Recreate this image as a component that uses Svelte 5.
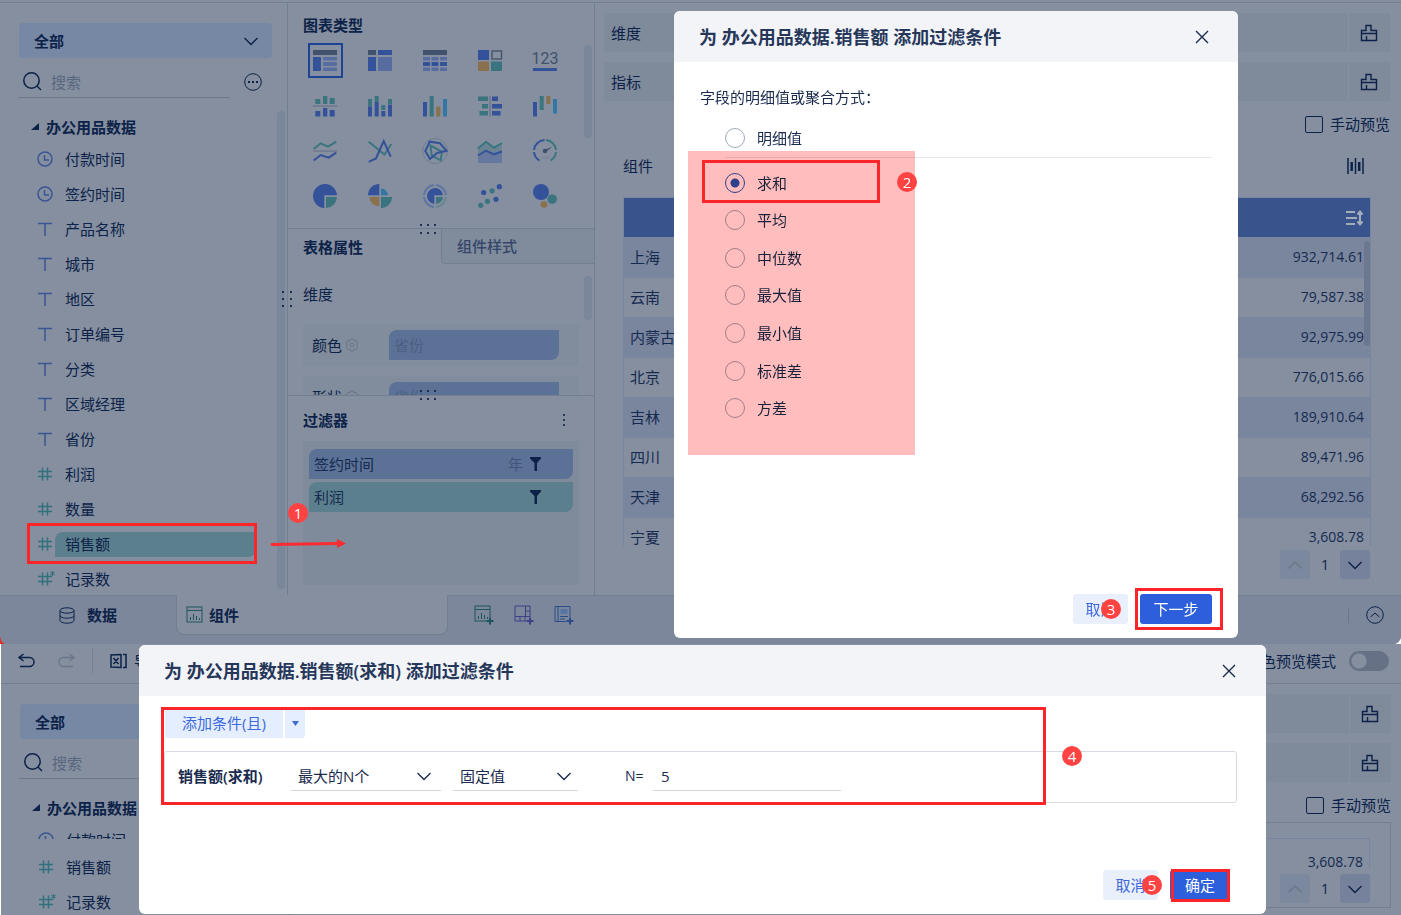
<script>
  const blue = "#34529a";
  const pale = "#576da0";
  const teal = "#3a757f";
  const gold = "#8a704c";
  const cyan = "#3377a5";
  const dark = "#41506b";
  const grey = "#737d92";

  const rect = (x, y, w, h, fill) =>
    `<rect x="${x}" y="${y}" width="${w}" height="${h}" fill="${fill}"/>`;
  const dot = (x, y, r, fill) =>
    `<circle cx="${x}" cy="${y}" r="${r}" fill="${fill}"/>`;
  const line = (points, color) =>
    `<polyline points="${points}" fill="none" stroke="${color}" stroke-width="2"/>`;
  const path = (d, fill) => `<path d="${d}" fill="${fill}"/>`;
  const stroke = (d, color) =>
    `<path d="${d}" fill="none" stroke="${color}" stroke-width="2"/>`;

  const cells = [0, 8.5, 17]
    .map((x) => rect(x, 8, 7, 3.5, pale) + rect(x, 13, 7, 4, blue) + rect(x, 18.5, 7, 3.5, pale))
    .join("");

  const charts = [
    { name: "分组表", art: rect(0, 1, 24, 5, dark) + rect(0, 8, 8, 14, blue) + rect(10, 8, 14, 3.5, pale) + rect(10, 13, 14, 4, pale) + rect(10, 18.5, 14, 3.5, pale) },
    { name: "交叉表", art: rect(0, 1, 8, 5, dark) + rect(10, 1, 14, 5, blue) + rect(0, 8, 8, 14, blue) + rect(10, 8, 14, 14, pale) },
    { name: "明细表", art: rect(0, 1, 24, 5, dark) + cells },
    { name: "热力图", art: rect(0, 1, 11, 10, blue) + `<rect x="14" y="2" width="9.5" height="8" fill="none" stroke="${dark}" stroke-width="1.3"/>` + rect(0, 12.5, 11, 9.5, gold) + rect(13, 12.5, 11, 9.5, teal) },
    { name: "指标卡", art: `<text x="12" y="15" text-anchor="middle" font-family="Roboto, sans-serif" font-size="16" fill="${dark}">123</text>` + rect(0, 19, 24, 3, blue) },
    { name: "对比柱图", art: rect(2.3, 5, 5, 5, teal) + rect(10, 2, 4.3, 8, teal) + rect(16.7, 4, 5, 6, teal) + rect(0, 11, 24, 2, grey) + rect(2.3, 17, 5, 5.5, blue) + rect(10, 14, 4.3, 8.5, blue) + rect(16.7, 16, 5, 6.5, blue) },
    { name: "堆积柱图", art: rect(0, 5, 4, 7.5, teal) + rect(6.7, 2, 4, 6, teal) + rect(13.3, 11, 4, 5, teal) + rect(20, 5, 4, 5, teal) + rect(0, 12.5, 4, 10, blue) + rect(6.7, 8, 4, 14.5, blue) + rect(13.3, 17, 4, 5.5, blue) + rect(20, 10.5, 4, 12, blue) },
    { name: "分区柱图", art: rect(0, 8, 4, 14.5, blue) + rect(6.7, 2, 4, 20.5, teal) + rect(13.3, 12.5, 4, 10, gold) + rect(20, 5, 4, 17.5, cyan) },
    { name: "对比条图", art: rect(11, 2, 2, 21, grey) + rect(0, 2.5, 10, 4.5, teal) + rect(4, 10, 6, 4.5, teal) + rect(1.5, 17, 8.5, 4.5, teal) + rect(14, 2.5, 6, 4.5, blue) + rect(14, 10, 10, 4.5, blue) + rect(14, 17, 8.5, 4.5, blue) },
    { name: "瀑布图", art: rect(0, 8, 4, 14.5, blue) + rect(6.7, 2, 4, 14, teal) + rect(13.3, 2, 4, 8, gold) + rect(20, 5, 4, 14.5, cyan) },
    { name: "范围面积图", art: line("0.7,10 7.7,4.3 15,7.7 23.3,2.7", teal) + rect(0, 11.2, 24, 1.8, grey) + line("0.7,21.5 7.7,16 15.7,18.7 23.3,13.7", blue) },
    { name: "折线图", art: line("0.7,2.7 16.5,15.5 23.3,5", teal) + line("0.7,22.8 8,19.5 15.7,2 22.7,17.7", blue) },
    { name: "雷达图", art: `<circle cx="12" cy="12" r="12.5" fill="none" stroke="${grey}"/>` + stroke("M7.5 6.5 19 12.7 17.7 21.3 8.7 16.5Z", teal) + stroke("M2.3 12 6.7 2.7 17 4.3 23.5 11.8 14 14 7 20Z", blue) },
    { name: "面积图", art: path("M0 9.5 8 2.5 16 9 24 4V13L16 16 8 12 0 17Z", "#6b8494") + line("0,9.5 8,2.8 16,8.7 24,4", teal) + path("M0 17 8 12 16 16 24 13V24H0Z", "#6778a0") + line("0,16.5 8,11.7 16,15.3 24,12.5", blue) },
    { name: "仪表盘", art: stroke("M1 11A11 11 0 0 1 11.5 1", blue) + stroke("M1 13A11 11 0 0 0 6.5 21.5", blue) + stroke("M13 1A11 11 0 0 1 23 11", teal) + stroke("M23 13A11 11 0 0 1 17.5 21.5", teal) + dot(12, 12, 2.3, dark) + path("M11.5 11 19.5 7.5 12.8 13Z", dark) + rect(8.5, 17.5, 7.5, 2, "#7b879b") },
    { name: "饼图", art: path("M11.3 12.7V24A12 12 0 1 1 24 11.3H11.3Z", blue) + path("M13 13H24A11.5 11.5 0 0 1 13 24Z", teal) },
    { name: "玫瑰图", art: path("M11.3 11.3V0A11.3 11.3 0 0 0 0 11.3Z", blue) + path("M13 11.3V4.5A7 7 0 0 1 20 11.3Z", cyan) + path("M11.3 13V22.3A9.7 9.7 0 0 1 1.5 13Z", gold) + path("M13 13H24A11 11 0 0 1 13 24Z", teal) },
    { name: "多层饼图", art: stroke("M1 11A11 11 0 0 1 11 1M13 1A11 11 0 0 1 23 11M11 23A11 11 0 0 1 1 13", "#5f74a2") + stroke("M23 13A11 11 0 0 1 13 23", "#67858f") + path("M11.3 12V20A8 8 0 1 1 20 11.3H11.3Z", blue) + path("M13 13H20A7.5 7.5 0 0 1 13 20Z", teal) },
    { name: "散点图", art: dot(21.3, 2.7, 2.6, blue) + dot(5.7, 8.5, 2.6, blue) + dot(14.2, 6.8, 2.6, teal) + dot(9.5, 17.3, 2.6, teal) + dot(18, 15.3, 2.6, blue) + dot(2.7, 21.3, 2.6, teal) },
    { name: "聚合气泡图", art: dot(8, 8, 8, blue) + dot(19.2, 15.2, 4.8, teal) + dot(11, 20.5, 3.3, gold) },
  ];

  const fields = [
    { name: "付款时间", type: "date" },
    { name: "签约时间", type: "date" },
    { name: "产品名称", type: "text" },
    { name: "城市", type: "text" },
    { name: "地区", type: "text" },
    { name: "订单编号", type: "text" },
    { name: "分类", type: "text" },
    { name: "区域经理", type: "text" },
    { name: "省份", type: "text" },
    { name: "利润", type: "number" },
    { name: "数量", type: "number" },
    { name: "销售额", type: "number" },
    { name: "记录数", type: "count" },
  ];

  const rows = [
    ["上海", "932,714.61"],
    ["云南", "79,587.38"],
    ["内蒙古", "92,975.99"],
    ["北京", "776,015.66"],
    ["吉林", "189,910.64"],
    ["四川", "89,471.96"],
    ["天津", "68,292.56"],
    ["宁夏", "3,608.78"],
  ];

  const aggregates = ["求和", "平均", "中位数", "最大值", "最小值", "标准差", "方差"];

  let selectedField = $state("销售额");
  let selectedChart = $state("分组表");
  let mode = $state("求和");
  let rank = $state("最大的N个");
  let valueType = $state("固定值");
  let n = $state("5");
</script>

{#snippet chevron(up = false)}
  <svg class="chevron" width="14" height="14" viewBox="0 0 14 14">
    <path d={up ? "M.5 10.5 7 4l6.500 6.500" : "M.5 4 7 10.500 13.500 4"} />
  </svg>
{/snippet}

{#snippet funnel()}
  <svg class="funnel" width="11" height="14" viewBox="0 0 11 14">
    <path d="M0 0h11v1.500L7 6v8H4.500V6L0 1.500z" />
  </svg>
{/snippet}

{#snippet fieldIcon(type)}
  <svg class="field-icon {type}" width="18" height="18" viewBox="0 0 18 18">
    {#if type === "date"}
      <circle cx="8" cy="8" r="7" />
      <path d="M7.500 4v5H12" />
    {:else if type === "text"}
      <path d="M1 2.500h14M8 2.500V15" />
    {:else}
      <path d="M1 5.500h14M1 10.500h14M5.500 1.500v13M10.500 1.500v13" />
      {#if type === "count"}
        <path class="star" d="M15.500 0v5M13.300 1.200l4.400 2.600M17.700 1.200l-4.400 2.600" />
      {/if}
    {/if}
  </svg>
{/snippet}

{#snippet fieldRow(field)}
  <button
    class="field"
    class:active={field.name === selectedField}
    onclick={() => (selectedField = field.name)}
  >
    {@render fieldIcon(field.type)}
    <span>{field.name}</span>
  </button>
{/snippet}

{#snippet sourceHead(id)}
  <button class="source"><b>全部</b>{@render chevron()}</button>
  <div class="search-row">
    <label class="search" for={id}>
      <svg width="19" height="19" viewBox="0 0 19 19">
        <circle cx="8.500" cy="8.500" r="7.700" />
        <path d="m14 14 4 4" />
      </svg>
      <input {id} type="text" placeholder="搜索" aria-label="搜索" />
    </label>
    <button class="more" aria-label="更多">
      <svg width="18" height="18" viewBox="0 0 18 18">
        <circle cx="9" cy="9" r="8.300" />
        <path class="plus" d="M4 9h2M8 9h2M12 9h2" />
      </svg>
    </button>
  </div>
  <div class="tree-head">
    <svg width="8" height="8" viewBox="0 0 8 8"><path d="M8 0v7H0z" /></svg>
    <b>办公用品数据</b>
  </div>
{/snippet}

{#snippet shelf(label)}
  <div class="shelf">
    <span>{label}</span>
    <button aria-label="清空{label}">
      <svg width="18" height="18" viewBox="0 0 18 18">
        <path d="M1.500 6.500h4.500V1.500h5v5h5.500v10h-15zM1.500 9.500h15M6.500 12v4.500" />
      </svg>
    </button>
  </div>
{/snippet}

{#snippet pager()}
  <nav class="pager" aria-label="分页">
    <button class="off" aria-label="上一页">{@render chevron(true)}</button>
    <span>1</span>
    <button aria-label="下一页">{@render chevron()}</button>
  </nav>
{/snippet}

{#snippet closeButton()}
  <button class="close" aria-label="关闭">
    <svg width="14" height="14" viewBox="0 0 14 14"><path d="m1 1 12 12M13 1 1 13" /></svg>
  </button>
{/snippet}

{#snippet bars()}
  <rect x="1" y="1" width="15" height="15" />
  <path d="M1 4.500h15M4.500 14v-3M7.500 14V8M10.500 14v-4M13.500 14v-2" />
{/snippet}

<section class="screen first">
  <div class="workspace">
    <aside class="fields">
      {@render sourceHead("search-fields")}
      <div class="tree">
        {#each fields as field}
          {@render fieldRow(field)}
        {/each}
      </div>
      <i class="scroll tree-scroll"></i>
      <i class="grip vertical"></i>
      <div class="mark mark-field"></div>
      <span class="badge badge-1">1</span>
      <svg class="arrow" width="76" height="12" viewBox="0 0 76 12">
        <path d="M1 6.500 67 5.500" fill="none" stroke="#fb2c31" stroke-width="3" stroke-linecap="round" />
        <path d="M66 1 75 5.500 66 10z" fill="#fb2c31" stroke="none" />
      </svg>
    </aside>

    <div class="settings">
      <div class="types">
        <h2>图表类型</h2>
        <div class="chart-grid">
          {#each charts as chart}
            <button
              class:picked={chart.name === selectedChart}
              aria-label={chart.name}
              onclick={() => (selectedChart = chart.name)}
            >
              <svg width="24" height="24" viewBox="0 0 24 24">{@html chart.art}</svg>
            </button>
          {/each}
        </div>
        <i class="scroll types-scroll"></i>
        <i class="grip"></i>
      </div>

      <div class="props">
        <div class="tabs">
          <button class="on">表格属性</button>
          <button>组件样式</button>
        </div>
        <h3>维度</h3>
        {#each ["颜色", "形状"] as prop}
          <div class="prop">
            <span>{prop}</span>
            <svg width="14" height="14" viewBox="0 0 14 14">
              <path d="M5.500 1h3l.6 1.800 2.300-.3 1.500 2.600L11.600 7l1.300 1.900-1.500 2.600-2.300-.3L8.500 13h-3l-.6-1.800-2.300.3L1.100 8.900 2.400 7 1.100 5.100l1.500-2.600 2.300.3z" />
              <circle cx="7" cy="7" r="2" />
            </svg>
            <div class="chip ghost">省份</div>
          </div>
        {/each}
        <i class="scroll props-scroll"></i>
      </div>

      <div class="filters">
        <i class="grip top"></i>
        <header>
          <h2>过滤器</h2>
          <button class="dots" aria-label="过滤器选项"><i></i><i></i><i></i></button>
        </header>
        <div class="drop">
          <div class="chip">签约时间 <small>年</small>{@render funnel()}</div>
          <div class="chip green">利润 {@render funnel()}</div>
        </div>
      </div>
    </div>

    <main class="preview">
      {@render shelf("维度")}
      {@render shelf("指标")}
      <label class="manual"><input type="checkbox" />手动预览</label>
      <div class="widget-head">
        <span>组件</span>
        <svg width="17" height="16" viewBox="0 0 17 16">
          <path d="M1 0v16M8.500 0v16M16 0v16" />
          <path class="thick" d="M4.700 4v9M12.200 4v9" />
        </svg>
      </div>
      <div class="table-wrap">
        <table>
          <thead>
            <tr>
              <th></th>
              <th>
                <svg width="18" height="16" viewBox="0 0 18 16">
                  <path d="M0 2h9M0 8h11M0 14h9M14 2v12M11.500 4.500 14 1.500l2.500 3M11.500 11.500l2.500 3 2.500-3" />
                </svg>
              </th>
            </tr>
          </thead>
          <tbody>
            {#each rows as [province, amount]}
              <tr><td>{province}</td><td>{amount}</td></tr>
            {/each}
          </tbody>
        </table>
        <i class="scroll table-scroll"></i>
      </div>
      {@render pager()}
    </main>
  </div>

  <footer class="bottom-bar">
    <button class="page-tab data">
      <svg width="16" height="17" viewBox="0 0 16 17">
        <ellipse cx="8" cy="3.500" rx="7" ry="2.700" />
        <path d="M1 3.500v10c0 1.500 3.200 2.700 7 2.700s7-1.200 7-2.700v-10M1 8.500c0 1.500 3.200 2.700 7 2.700s7-1.200 7-2.700" />
      </svg>
      数据
    </button>
    <button class="page-tab current">
      <svg class="ink-green" width="17" height="17" viewBox="0 0 17 17">{@render bars()}</svg>
      组件
    </button>
    <div class="adders">
      <button aria-label="添加组件">
        <svg class="ink-green" width="20" height="20" viewBox="0 0 20 20">
          {@render bars()}
          <path class="plus" d="M16 12.500v7M12.500 16h7" />
        </svg>
      </button>
      <button aria-label="添加仪表板">
        <svg class="ink-purple" width="20" height="20" viewBox="0 0 20 20">
          <path d="M16 12V1H1v15h11M11.500 1v10.500M1 11.500h15M11.500 6H16M6 11.500V16M11 11.500V16" />
          <path class="plus" d="M16 12.500v7M12.500 16h7" />
        </svg>
      </button>
      <button aria-label="添加报告">
        <svg class="ink-blue" width="20" height="20" viewBox="0 0 20 20">
          <path d="M16 12V1.500H1v15h11M4 1.500v15M6 11.500h8M6 14h5" />
          <rect x="6.500" y="4" width="7" height="5" fill="#5674a6" stroke="none" />
          <path class="plus" d="M16 12.500v7M12.500 16h7" />
        </svg>
      </button>
    </div>
    <button class="collapse" aria-label="收起">
      <i></i>
      <svg width="18" height="18" viewBox="0 0 18 18">
        <circle cx="9" cy="9" r="8.300" />
        <path d="m4.500 11 4.500-4 4.500 4" />
      </svg>
    </button>
  </footer>

  <div class="dialog pick" role="dialog" aria-labelledby="pick-title">
    <header>
      <h1 id="pick-title">为 办公用品数据.销售额 添加过滤条件</h1>
      {@render closeButton()}
    </header>
    <fieldset>
      <legend>字段的明细值或聚合方式：</legend>
      <label class="detail"><input type="radio" value="明细值" bind:group={mode} />明细值</label>
      <div class="aggregates">
        {#each aggregates as item}
          <label><input type="radio" value={item} bind:group={mode} />{item}</label>
        {/each}
      </div>
    </fieldset>
    <div class="actions">
      <button class="cancel">取消</button>
      <button class="primary wide">下一步</button>
    </div>
    <div class="wash"></div>
    <div class="mark mark-sum"></div>
    <div class="mark mark-next"></div>
    <span class="badge badge-2">2</span>
    <span class="badge badge-3">3</span>
  </div>
</section>

<section class="screen second">
  <div class="toolbar">
    <button aria-label="撤销">
      <svg width="17" height="15" viewBox="0 0 17 15"><path d="M5.500 1 1 4.500 5.500 8M1 4.500h10.500a4.500 4.500 0 0 1 0 9H2" /></svg>
    </button>
    <button class="off" aria-label="重做">
      <svg width="17" height="15" viewBox="0 0 17 15"><path d="M11.500 1 16 4.500 11.500 8M16 4.500H5.500a4.500 4.500 0 0 0 0 9H15" /></svg>
    </button>
    <button class="export">
      <svg width="17" height="16" viewBox="0 0 17 16">
        <path d="M11 1.500 1 2v12l10 .500zM13 1.500h3v13h-3M3.500 5l5 6M8.500 5l-5 6" />
      </svg>
      导
    </button>
    <label class="preview-mode">色预览模式<input type="checkbox" /></label>
  </div>
  <div class="workspace">
    <aside class="fields">
      {@render sourceHead("search-fields-2")}
      <div class="tree cut">{@render fieldRow(fields[0])}</div>
      <div class="tree tail">
        <div class="field">{@render fieldIcon("number")}<span>销售额</span></div>
        {@render fieldRow(fields[12])}
      </div>
    </aside>
    <main class="preview">
      {@render shelf("维度")}
      {@render shelf("指标")}
      <label class="manual"><input type="checkbox" />手动预览</label>
      <div class="frame">
        <div class="last-row">3,608.78</div>
        {@render pager()}
      </div>
    </main>
  </div>

  <div class="dialog condition" role="dialog" aria-labelledby="condition-title">
    <header>
      <h1 id="condition-title">为 办公用品数据.销售额(求和) 添加过滤条件</h1>
      {@render closeButton()}
    </header>
    <div class="add">
      <button>添加条件(且)</button>
      <button aria-label="更多条件">
        <svg width="7" height="5" viewBox="0 0 7 5"><path d="M0 0h7L3.500 5z" /></svg>
      </button>
    </div>
    <div class="rule">
      <b>销售额(求和)</b>
      <div class="drop-down rank">
        <select aria-label="条件" bind:value={rank}>
          <option>最大的N个</option>
        </select>
        {@render chevron()}
      </div>
      <div class="drop-down kind">
        <select aria-label="值类型" bind:value={valueType}>
          <option>固定值</option>
        </select>
        {@render chevron()}
      </div>
      <label for="n-value">N=</label>
      <input id="n-value" type="text" bind:value={n} />
    </div>
    <div class="actions">
      <button class="cancel">取消</button>
      <button class="primary">确定</button>
    </div>
    <div class="mark mark-rule"></div>
    <div class="mark mark-ok"></div>
    <span class="badge badge-4">4</span>
    <span class="badge badge-5">5</span>
  </div>
</section>

<style>
  :global(body) {
    background: #fff;
    overflow: hidden;
  }

  .screen {
    --page: #858f9f;
    --ink: #0c2248;
    --line: #737e91;
    position: relative;
    background: var(--page);
    color: var(--ink);
    font: 15px/20px "Open Sans", "Noto Sans CJK SC", sans-serif;
  }
  .screen * {
    box-sizing: border-box;
  }
  button,
  input,
  select {
    font: inherit;
    color: inherit;
    background: none;
    border: 0;
    padding: 0;
    margin: 0;
    outline: 0;
  }
  button {
    cursor: pointer;
  }
  svg {
    flex: none;
    fill: none;
    stroke: currentColor;
    overflow: visible;
  }
  b,
  h2 {
    font-weight: 600;
  }
  h1,
  h2,
  h3 {
    margin: 0;
    font-size: 15px;
  }
  .chevron {
    stroke-width: 1.4;
  }

  .first {
    padding-top: 2px;
    border-radius: 0 0 8px 0;
  }
  .first::after {
    content: "";
    position: absolute;
    left: 0;
    bottom: 0;
    width: 8px;
    height: 7px;
    background: radial-gradient(circle at 8px 0, transparent 7px, #d8352f 8px);
  }
  .workspace {
    display: flex;
  }
  .first .workspace {
    border-top: 1px solid var(--line);
    height: 593px;
  }

  .fields {
    position: relative;
    flex: none;
    width: 288px;
    padding: 20px 15px 0 18px;
    border-right: 1px solid var(--line);
  }
  .source {
    display: flex;
    align-items: center;
    justify-content: space-between;
    width: 253px;
    height: 35px;
    margin-left: 1px;
    padding: 0 14px 0 15px;
    background: #7688a4;
    border-radius: 4px;
  }
  .search-row {
    display: flex;
    align-items: center;
    gap: 14px;
    margin-top: 8px;
  }
  .search {
    display: flex;
    align-items: center;
    gap: 9px;
    width: 212px;
    height: 32px;
    padding-left: 5px;
    border-bottom: 1px solid #6d788b;
  }
  .search svg {
    stroke-width: 1.5;
  }
  .search input {
    min-width: 0;
    flex: 1;
  }
  .search input::placeholder {
    color: #596680;
    opacity: 1;
  }
  .more,
  .close {
    display: flex;
  }
  .tree-head {
    display: flex;
    align-items: center;
    gap: 7px;
    height: 30px;
    margin-top: 14px;
    padding-left: 13px;
  }
  .tree-head svg {
    fill: currentColor;
    stroke: none;
  }
  .tree {
    display: flex;
    flex-direction: column;
  }
  .first .tree {
    height: 453px;
    overflow: hidden;
  }
  .field {
    display: flex;
    align-items: center;
    flex: none;
    width: 238px;
    height: 35px;
    padding-left: 19px;
    text-align: left;
  }
  .field span {
    flex: 1;
    height: 25px;
    line-height: 25px;
    padding-left: 10px;
  }
  .field.active span {
    background: #5c7f8d;
    border-radius: 8px 0;
  }
  .field-icon {
    color: #3b5593;
    stroke-width: 1.5;
  }
  .field-icon.number,
  .field-icon.count {
    color: #32707c;
  }
  .star {
    stroke-width: 1;
  }

  .scroll {
    position: absolute;
    width: 8px;
    border-radius: 4px;
    background: #7a869a;
  }
  .tree-scroll {
    top: 108px;
    right: 2px;
    height: 478px;
  }
  .types-scroll {
    top: 42px;
    right: 2px;
    height: 93px;
  }
  .props-scroll {
    top: 47px;
    right: 2px;
    height: 44px;
  }
  .grip {
    position: absolute;
    z-index: 1;
    left: 132px;
    bottom: -6px;
    width: 17px;
    height: 10px;
    background: conic-gradient(from 0deg at 2px 2px, transparent 270deg, #1d3052 0) 0 0 / 7px 8px;
  }
  .grip.top {
    top: -6px;
    bottom: auto;
  }
  .grip.vertical {
    left: 282px;
    top: 288px;
    width: 10px;
    height: 16px;
    background-size: 8px 7px;
  }

  .settings {
    display: flex;
    flex-direction: column;
    flex: none;
    width: 307px;
    border-right: 1px solid var(--line);
  }
  .types {
    position: relative;
    height: 226px;
    padding: 12px 15px 0;
    border-bottom: 1px solid var(--line);
  }
  .chart-grid {
    display: grid;
    grid-template-columns: repeat(5, 35px);
    gap: 10px 20px;
    margin: 8px 5px 0;
  }
  .chart-grid button {
    display: grid;
    place-items: center start;
    height: 35px;
    padding-left: 3px;
    border: 2px solid transparent;
  }
  .chart-grid button.picked {
    border-color: #1c4394;
  }
  .chart-grid svg {
    stroke: none;
  }

  .props {
    position: relative;
    height: 166px;
    overflow: hidden;
    padding-left: 15px;
  }
  .tabs {
    display: flex;
    height: 35px;
  }
  .tabs button {
    flex: 1;
    padding-left: 15px;
    text-align: left;
    font-weight: 500;
    color: #35466a;
    background: #808b9c;
    border: 1px solid var(--line);
    border-width: 0 0 1px 1px;
    border-bottom-left-radius: 5px;
  }
  .tabs .on {
    flex: 0 0 138px;
    padding: 0;
    font-weight: 600;
    color: var(--ink);
    background: none;
    border: 0;
  }
  .props h3 {
    height: 60px;
    padding-top: 20px;
    font-weight: 400;
  }
  .prop {
    display: flex;
    align-items: center;
    width: 276px;
    height: 42px;
    margin-bottom: 10px;
    padding-left: 9px;
    background: #818c9c;
  }
  .prop svg {
    margin: 0 30px 0 3px;
    color: #69758a;
  }
  .chip {
    display: flex;
    align-items: center;
    height: 30px;
    padding: 0 32px 0 5px;
    border-radius: 8px 0;
    background: #5c7196;
    color: #142b50;
  }
  .chip.ghost {
    width: 170px;
    color: #4b5f84;
  }
  .chip.green {
    background: #5c7f8d;
  }
  .chip small {
    margin-left: auto;
    margin-right: 7px;
    font-size: 15px;
    color: #41557b;
  }
  .funnel {
    margin-left: auto;
    fill: var(--ink);
    stroke: none;
  }
  small + .funnel {
    margin-left: 0;
  }
  .filters {
    position: relative;
    flex: 1;
    padding: 0 15px;
    border-top: 1px solid var(--line);
  }
  .filters header {
    display: flex;
    align-items: center;
    justify-content: space-between;
    height: 45px;
    padding: 2px 14px 0 0;
  }
  .dots {
    display: grid;
    gap: 3px;
  }
  .dots i {
    width: 2px;
    height: 2px;
    background: #2a3b5c;
  }
  .drop {
    display: flex;
    flex-direction: column;
    gap: 3px;
    height: 144px;
    padding: 8px 6px;
    background: #7f8a9b;
  }

  .preview {
    flex: 1;
    min-width: 0;
    padding: 10px 11px 0 9px;
  }
  .shelf {
    display: flex;
    align-items: center;
    justify-content: space-between;
    height: 39px;
    margin-bottom: 10px;
    padding-left: 7px;
    background: #7f8a9b;
  }
  .shelf button {
    display: grid;
    place-items: center;
    width: 42px;
    height: 39px;
    padding-right: 2px;
    border-left: 1px solid #8691a1;
  }
  .shelf svg {
    stroke-width: 1.4;
  }
  .manual {
    display: flex;
    align-items: center;
    justify-content: flex-end;
    gap: 7px;
    height: 26px;
  }
  .manual input {
    appearance: none;
    width: 18px;
    height: 17px;
    border: 1px solid var(--ink);
    border-radius: 2px;
  }
  .widget-head {
    display: flex;
    align-items: center;
    justify-content: space-between;
    height: 60px;
    padding: 0 26px 3px 19px;
  }
  .widget-head svg {
    stroke-width: 1.5;
  }
  .widget-head .thick {
    stroke-width: 2.5;
  }
  .table-wrap {
    position: relative;
    height: 349px;
    overflow: hidden;
    margin: 0 19px;
    border: 1px solid #7985a0;
    border-bottom: 0;
  }
  table {
    width: 100%;
    border-collapse: collapse;
  }
  th {
    height: 39px;
    padding: 0 6px 2px 0;
    background: #39548c;
    color: #a3acbb;
    text-align: right;
  }
  th svg {
    display: inline-block;
    vertical-align: middle;
    stroke-width: 2;
  }
  td {
    height: 40px;
    padding: 0 6px;
    border-bottom: 1px solid #7985a0;
    color: #162a50;
  }
  td:last-child,
  .last-row {
    font-size: 14px;
    text-align: right;
  }
  tbody tr:nth-child(odd) {
    background: #7a869e;
  }
  .table-scroll {
    top: 43px;
    right: 0;
    width: 6px;
    height: 105px;
    background: #6c7890;
  }
  .pager {
    display: flex;
    justify-content: flex-end;
    align-items: center;
    gap: 11px;
    margin: 4px 20px 0 0;
    font-size: 14px;
  }
  .pager button {
    display: grid;
    place-items: center;
    width: 30px;
    height: 29px;
    border-radius: 3px;
    background: #76829c;
  }
  .pager .off {
    background: #7c889e;
    color: #6b768a;
  }

  .bottom-bar {
    display: flex;
    height: 49px;
    background: #7c879b;
    border-bottom-right-radius: 8px;
  }
  .page-tab {
    display: flex;
    align-items: center;
    font-weight: 600;
  }
  .page-tab.data {
    justify-content: center;
    gap: 12px;
    width: 176px;
    height: 39px;
    border-top: 1px solid var(--line);
  }
  .page-tab.current {
    gap: 6px;
    width: 272px;
    height: 40px;
    padding-left: 9px;
    background: var(--page);
    border: 1px solid var(--line);
    border-top: 0;
    border-radius: 0 0 8px 8px;
  }
  .adders {
    display: flex;
    flex: 1;
    gap: 20px;
    height: 39px;
    padding-left: 26px;
    border-top: 1px solid var(--line);
  }
  .adders button {
    display: flex;
    align-items: center;
  }
  .ink-green {
    color: #1f5560;
  }
  .ink-purple {
    color: #3e3f88;
  }
  .ink-blue {
    color: #2b4c88;
  }
  .plus {
    stroke-width: 2;
  }
  .collapse {
    display: flex;
    align-items: center;
    gap: 17px;
    width: 53px;
    height: 39px;
    border-top: 1px solid var(--line);
  }
  .collapse i {
    width: 1px;
    height: 15px;
    background: #6c778c;
  }

  .dialog {
    position: absolute;
    z-index: 2;
    display: flex;
    flex-direction: column;
    background: #fff;
    border-radius: 6px;
    color: #1a2b4e;
  }
  .dialog header {
    display: flex;
    align-items: center;
    justify-content: space-between;
    height: 51px;
    padding: 0 29px 0 25px;
    background: #f2f4f8;
    border-radius: 6px 6px 0 0;
  }
  h1 {
    font-size: 18px;
    font-weight: 600;
    color: #26375a;
  }
  .close svg {
    stroke-width: 1.4;
  }
  .pick {
    top: 11px;
    left: 674px;
    width: 564px;
    height: 627px;
  }
  fieldset {
    margin: 0;
    padding: 25px 26px 0;
    border: 0;
  }
  legend {
    float: left;
    width: 100%;
    padding: 0;
  }
  fieldset label {
    display: flex;
    align-items: center;
    gap: 12px;
  }
  .detail {
    clear: both;
    height: 51px;
    padding: 12px 0 0;
    margin-left: 25px;
    border-bottom: 1px solid #e5e7ec;
  }
  .aggregates {
    display: grid;
    grid-auto-rows: 1fr;
    height: 263px;
    margin: 6px 0 0 25px;
  }
  input[type="radio"] {
    appearance: none;
    width: 20px;
    height: 20px;
    border: 1px solid #a0a8b8;
    border-radius: 50%;
  }
  input[type="radio"]:checked {
    border-color: #2f54bb;
    background: radial-gradient(circle, #2f54bb 4px, transparent 5px);
  }
  .wash {
    position: absolute;
    top: 140px;
    left: 14px;
    width: 227px;
    height: 304px;
    background: #ffbdbd;
    mix-blend-mode: multiply;
    pointer-events: none;
  }
  .actions {
    display: flex;
    justify-content: flex-end;
    gap: 12px;
    margin-top: auto;
    padding: 0 26px 14px;
  }
  .condition .actions {
    padding-right: 36px;
  }
  .actions button {
    width: 55px;
    height: 30px;
    border-radius: 3px;
  }
  .actions .cancel {
    background: #e9effb;
    color: #3d69dc;
  }
  .actions .primary {
    width: 60px;
    background: #2d5fdc;
    color: #fff;
  }
  .actions .primary.wide {
    width: 72px;
  }

  .mark {
    position: absolute;
    border: 3px solid #fb252a;
    pointer-events: none;
  }
  .mark-field {
    top: 520px;
    left: 27px;
    width: 230px;
    height: 41px;
  }
  .mark-sum {
    top: 149px;
    left: 28px;
    width: 178px;
    height: 43px;
  }
  .mark-next {
    right: 15px;
    bottom: 8px;
    width: 88px;
    height: 42px;
  }
  .mark-rule {
    top: 62px;
    left: 22px;
    width: 885px;
    height: 98px;
  }
  .mark-ok {
    right: 36px;
    bottom: 12px;
    width: 59px;
    height: 33px;
  }
  .badge {
    position: absolute;
    z-index: 3;
    width: 20px;
    height: 20px;
    border-radius: 50%;
    background: #ff4242;
    color: #fff;
    text-align: center;
  }
  .badge-1 {
    top: 500px;
    left: 288px;
  }
  .badge-2 {
    top: 161px;
    left: 223px;
  }
  .badge-3 {
    right: 117px;
    bottom: 19px;
  }
  .badge-4 {
    top: 101px;
    left: 923px;
  }
  .badge-5 {
    right: 104px;
    bottom: 19px;
  }
  .arrow {
    position: absolute;
    z-index: 1;
    top: 535px;
    left: 271px;
  }

  .second {
    margin-left: 1px;
  }
  .toolbar {
    display: flex;
    align-items: center;
    height: 40px;
    padding: 0 12px 6px 17px;
    border-bottom: 1px solid var(--line);
  }
  .toolbar button {
    display: flex;
    align-items: center;
    gap: 7px;
    margin-right: 23px;
  }
  .toolbar svg {
    stroke-width: 1.5;
  }
  .toolbar .off {
    margin-right: 17px;
    color: #6b768a;
  }
  .toolbar .export {
    height: 25px;
    padding-left: 17px;
    border-left: 1px solid var(--line);
  }
  .preview-mode {
    display: flex;
    align-items: center;
    gap: 13px;
    margin-left: auto;
  }
  .preview-mode input {
    appearance: none;
    width: 40px;
    height: 20px;
    border-radius: 10px;
    background: radial-gradient(circle at 10px 10px, #858f9f 7px, transparent 8px) #667186;
  }
  .second .preview {
    padding-right: 10px;
  }
  .tree.cut {
    height: 16px;
    overflow: hidden;
  }
  .tree.tail {
    height: 76px;
    padding-top: 11px;
    overflow: hidden;
  }
  .frame {
    margin-top: 4px;
    height: 86px;
    border: 1px solid var(--line);
    padding-top: 15px;
  }
  .last-row {
    height: 32px;
    margin-right: 20px;
    padding: 13px 6px 0 0;
    border: 1px solid #7985a0;
    border-bottom: 0;
    color: #162a50;
  }

  .condition {
    top: 1px;
    left: 138px;
    right: 135px;
    height: 269px;
  }
  .condition header {
    padding-right: 30px;
  }
  .add {
    display: flex;
    gap: 2px;
    margin: 12px 0 13px 26px;
    color: #3d69dc;
  }
  .add button {
    width: 118px;
    height: 30px;
    background: #e5eeff;
    border-radius: 3px 0 0 3px;
  }
  .add button + button {
    display: grid;
    place-items: center;
    width: 20px;
    border-radius: 0 3px 3px 0;
  }
  .add svg {
    fill: currentColor;
    stroke: none;
  }
  .rule {
    display: flex;
    align-items: center;
    height: 52px;
    margin: 0 29px 0 25px;
    padding: 0 0 2px 13px;
    border: 1px solid #d8dbe3;
    border-radius: 3px;
  }
  .rule b {
    width: 113px;
  }
  .drop-down {
    display: flex;
    align-items: center;
    height: 30px;
    margin-right: 12px;
    border-bottom: 1px solid #d4d8e2;
  }
  .drop-down select {
    appearance: none;
    flex: none;
    width: 100%;
    height: 29px;
    padding-left: 7px;
  }
  .drop-down .chevron {
    margin-left: -24px;
    pointer-events: none;
  }
  .rank {
    width: 150px;
  }
  .kind {
    width: 125px;
    margin-right: 47px;
  }
  .kind .chevron {
    margin-left: -21px;
  }
  .rule label {
    width: 28px;
    font-size: 14px;
  }
  .rule input {
    width: 188px;
    height: 30px;
    padding-left: 8px;
    border-bottom: 1px solid #d4d8e2;
  }
</style>
